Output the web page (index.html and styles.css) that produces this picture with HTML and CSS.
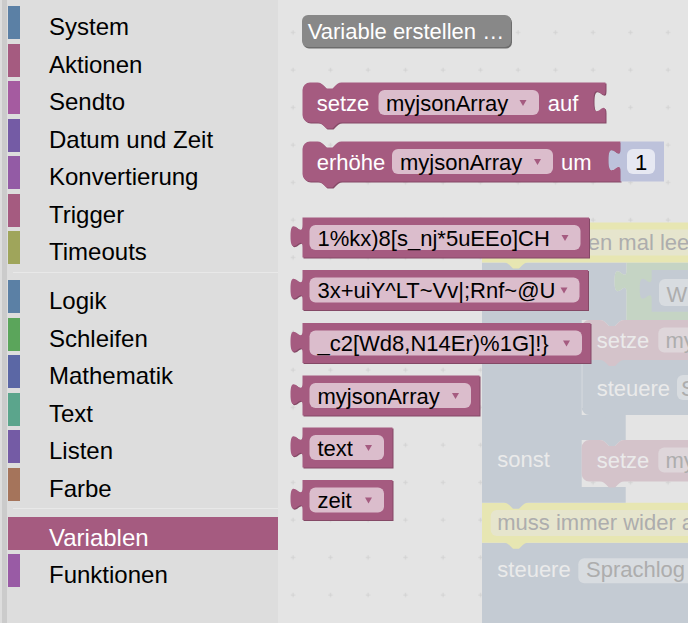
FILE: index.html
```html
<!DOCTYPE html>
<html lang="de">
<head>
<meta charset="utf-8">
<title>Blockly – Variablen</title>
<link rel="stylesheet" href="styles.css">
</head>
<body>
<div class="app">
  <nav class="toolbox">
    <div class="row"><span class="bar c-system"></span><span class="label">System</span></div>
    <div class="row"><span class="bar c-aktionen"></span><span class="label">Aktionen</span></div>
    <div class="row"><span class="bar c-sendto"></span><span class="label">Sendto</span></div>
    <div class="row"><span class="bar c-datum"></span><span class="label">Datum und Zeit</span></div>
    <div class="row"><span class="bar c-konv"></span><span class="label">Konvertierung</span></div>
    <div class="row"><span class="bar c-trigger"></span><span class="label">Trigger</span></div>
    <div class="row"><span class="bar c-timeouts"></span><span class="label">Timeouts</span></div>
    <div class="sep"></div>
    <div class="row"><span class="bar c-logik"></span><span class="label">Logik</span></div>
    <div class="row"><span class="bar c-schleifen"></span><span class="label">Schleifen</span></div>
    <div class="row"><span class="bar c-mathe"></span><span class="label">Mathematik</span></div>
    <div class="row"><span class="bar c-text"></span><span class="label">Text</span></div>
    <div class="row"><span class="bar c-listen"></span><span class="label">Listen</span></div>
    <div class="row"><span class="bar c-farbe"></span><span class="label">Farbe</span></div>
    <div class="sep"></div>
    <div class="row selected"><span class="bar c-variablen"></span><span class="label">Variablen</span></div>
    <div class="row"><span class="bar c-funktionen"></span><span class="label">Funktionen</span></div>
  </nav>
  <main class="workspace">
    <svg class="canvas" width="410" height="623" viewBox="278 0 410 623" xmlns="http://www.w3.org/2000/svg">
      <defs>
        <pattern id="grid" patternUnits="userSpaceOnUse" x="290.75" y="30.25" width="37.5" height="37.5">
          <path class="grid-mark" d="M0,2.25 H4.5 M2.25,0 V4.5"/>
        </pattern>
      </defs>
      <rect x="278" y="0" width="410" height="623" fill="url(#grid)"/>

      <!-- workspace blocks seen through the flyout -->
      <g class="bg-blocks">
        <path class="f-blue" d="M482,542.7 H700 V640 H482 Z"/>
        <text class="f-label" x="497.3" y="577">steuere</text>
        <rect class="f-blue-field" x="578.3" y="558.3" width="150" height="25" rx="6"/>
        <text class="f-ftext" x="586" y="577">Sprachlog</text>

        <path class="f-yellow" d="M482,502.7 H700 V542.7 H528 c-3,0 -4.5,1.5 -6,3 l-3,3 h-6 l-3,-3 c-1.5,-1.5 -3,-3 -6,-3 H482 Z"/>
        <rect class="f-yellow-field" x="490.7" y="510" width="260" height="26" rx="6"/>
        <text class="f-ftext" x="497.3" y="530">muss immer wider abgefragt werden</text>

        <path class="f-blue" d="M482,262.5 H626.5 V270 c0,15 -12,-12 -12,11.25 s12,-3.75 12,11.25 V320 H624 c-3,0 -4.5,1.5 -6,3 l-3,3 h-6 l-3,-3 c-1.5,-1.5 -3,-3 -6,-3 H581.7 V415 H625.7 V440 H624 c-3,0 -4.5,1.5 -6,3 l-3,3 h-6 l-3,-3 c-1.5,-1.5 -3,-3 -6,-3 H581.7 V487 H625.7 V502.7 H528 c-3,0 -4.5,1.5 -6,3 l-3,3 h-6 l-3,-3 c-1.5,-1.5 -3,-3 -6,-3 H482 Z"/>
        <text class="f-label" x="497.3" y="467">sonst</text>

        <path class="f-green" d="M626.5,262.5 H700 V320 H626.5 V292.5 c0,-15 -12,12 -12,-11.25 s12,3.75 12,-11.25 Z"/>
        <path class="f-blue" d="M651.7,270 H700 V311.7 H651.7 V300 c0,-15 -12,12 -12,-11.25 s12,3.75 12,-11.25 Z"/>
        <rect class="f-blue-field" x="659" y="279" width="60" height="27" rx="6"/>
        <text class="f-ftext" x="666.5" y="302">W</text>

        <path class="f-yellow" d="M482,222.5 H700 V262.5 H528 c-3,0 -4.5,1.5 -6,3 l-3,3 h-6 l-3,-3 c-1.5,-1.5 -3,-3 -6,-3 H482 Z"/>
        <rect class="f-yellow-field" x="582" y="229.5" width="200" height="26" rx="6"/>
        <text class="f-ftext" x="575.5" y="250">hen mal leer</text>

        <path class="f-blue" d="M581.7,360 H700 V415 H624 c-3,0 -4.5,1.5 -6,3 l-3,3 h-6 l-3,-3 c-1.5,-1.5 -3,-3 -6,-3 H589.2 a7.5,7.5 0 0 1 -7.5,-7.5 Z"/>
        <path class="f-edge" d="M582.2,362 V408"/>
        <text class="f-label" x="596.7" y="395.5">steuere</text>
        <rect class="f-blue-field" x="677" y="375" width="60" height="25" rx="6"/>
        <text class="f-ftext" x="681" y="395.5">S</text>

        <path class="f-pink" d="M581.7,327.5 a7.5,7.5 0 0 1 7.5,-7.5 H600 c3,0 4.5,1.5 6,3 l3,3 h6 l3,-3 c1.5,-1.5 3,-3 6,-3 H700 V360 H624 c-3,0 -4.5,1.5 -6,3 l-3,3 h-6 l-3,-3 c-1.5,-1.5 -3,-3 -6,-3 H581.7 Z"/>
        <text class="f-label" x="596.7" y="348">setze</text>
        <rect class="f-pink-field" x="658.3" y="327.5" width="60" height="25" rx="6"/>
        <text class="f-ftext" x="665.5" y="348">my</text>

        <path class="f-pink" d="M581.7,447.5 a7.5,7.5 0 0 1 7.5,-7.5 H600 c3,0 4.5,1.5 6,3 l3,3 h6 l3,-3 c1.5,-1.5 3,-3 6,-3 H700 V481.5 H624 c-3,0 -4.5,1.5 -6,3 l-3,3 h-6 l-3,-3 c-1.5,-1.5 -3,-3 -6,-3 H589.2 a7.5,7.5 0 0 1 -7.5,-7.5 Z"/>
        <text class="f-label" x="596.7" y="467.5">setze</text>
        <rect class="f-pink-field" x="658.3" y="447.5" width="60" height="25" rx="6"/>
        <text class="f-ftext" x="665.5" y="467.5">my</text>
      </g>

      <!-- flyout -->
      <g class="flyout">
        <rect class="btn-shadow" x="303" y="16.5" width="209" height="32" rx="6"/>
        <rect class="btn" x="302" y="15" width="209" height="32" rx="6"/>
        <text class="t-light" x="307.7" y="38.7">Variable erstellen …</text>

        <!-- setze … auf -->
        <path class="blk-dark" transform="translate(1,1)" d="M302.5,90 a7.5,7.5 0 0 1 7.5,-7.5 H317.5 c3,0 4.5,1.5 6,3 l3,3 h6 l3,-3 c1.5,-1.5 3,-3 6,-3 H605.5 V90 c0,15 -12,-12 -12,11.25 s12,-3.75 12,11.25 V122.5 H341.5 c-3,0 -4.5,1.5 -6,3 l-3,3 h-6 l-3,-3 c-1.5,-1.5 -3,-3 -6,-3 H310 a7.5,7.5 0 0 1 -7.5,-7.5 Z"/>
        <path class="blk" d="M302.5,90 a7.5,7.5 0 0 1 7.5,-7.5 H317.5 c3,0 4.5,1.5 6,3 l3,3 h6 l3,-3 c1.5,-1.5 3,-3 6,-3 H605.5 V90 c0,15 -12,-12 -12,11.25 s12,-3.75 12,11.25 V122.5 H341.5 c-3,0 -4.5,1.5 -6,3 l-3,3 h-6 l-3,-3 c-1.5,-1.5 -3,-3 -6,-3 H310 a7.5,7.5 0 0 1 -7.5,-7.5 Z"/>
        <text class="t-light" x="316.7" y="110.5">setze</text>
        <rect class="pill" x="378.5" y="90" width="160.5" height="25" rx="6"/>
        <text class="t-dark" x="386" y="110.5">myjsonArray</text>
        <path class="arrow" d="M519.5,100 h7 l-3.5,6 Z"/>
        <text class="t-light" x="547.7" y="110.5">auf</text>

        <!-- erhöhe … um 1 -->
        <path class="blk-dark" transform="translate(1,1)" d="M302.5,149 a7.5,7.5 0 0 1 7.5,-7.5 H317.5 c3,0 4.5,1.5 6,3 l3,3 h6 l3,-3 c1.5,-1.5 3,-3 6,-3 H620.5 V149 c0,15 -12,-12 -12,11.25 s12,-3.75 12,11.25 V181.5 H341.5 c-3,0 -4.5,1.5 -6,3 l-3,3 h-6 l-3,-3 c-1.5,-1.5 -3,-3 -6,-3 H310 a7.5,7.5 0 0 1 -7.5,-7.5 Z"/>
        <path class="blk" d="M302.5,149 a7.5,7.5 0 0 1 7.5,-7.5 H317.5 c3,0 4.5,1.5 6,3 l3,3 h6 l3,-3 c1.5,-1.5 3,-3 6,-3 H620.5 V149 c0,15 -12,-12 -12,11.25 s12,-3.75 12,11.25 V181.5 H341.5 c-3,0 -4.5,1.5 -6,3 l-3,3 h-6 l-3,-3 c-1.5,-1.5 -3,-3 -6,-3 H310 a7.5,7.5 0 0 1 -7.5,-7.5 Z"/>
        <text class="t-light" x="316.7" y="169.5">erhöhe</text>
        <rect class="pill" x="392" y="149" width="161" height="25" rx="6"/>
        <text class="t-dark" x="400" y="169.5">myjsonArray</text>
        <path class="arrow" d="M534,159 h7 l-3.5,6 Z"/>
        <text class="t-light" x="561" y="169.5">um</text>
        <path class="num-blk" d="M620.5,141.5 H664 V181.5 H620.5 V171.5 c0,-15 -12,12 -12,-11.25 s12,3.75 12,-11.25 Z"/>
        <rect class="num-field" x="627" y="149" width="28" height="25" rx="6"/>
        <text class="t-dark num" x="641" y="169.5">1</text>

        <!-- variable getters -->
        <path class="blk-dark" transform="translate(1,1)" d="M302.5,217.5 H589 V257.5 H302.5 V247.5 c0,-15 -12,12 -12,-11.25 s12,3.75 12,-11.25 Z"/>
        <path class="blk" d="M302.5,217.5 H589 V257.5 H302.5 V247.5 c0,-15 -12,12 -12,-11.25 s12,3.75 12,-11.25 Z"/>
        <rect class="pill" x="309.5" y="225" width="271" height="25" rx="6"/>
        <text class="t-dark" x="317.5" y="245.5">1%kx)8[s_nj*5uEEo]CH</text>
        <path class="arrow" d="M561.5,235 h7 l-3.5,6 Z"/>

        <path class="blk-dark" transform="translate(1,1)" d="M302.5,270 H588 V310 H302.5 V300 c0,-15 -12,12 -12,-11.25 s12,3.75 12,-11.25 Z"/>
        <path class="blk" d="M302.5,270 H588 V310 H302.5 V300 c0,-15 -12,12 -12,-11.25 s12,3.75 12,-11.25 Z"/>
        <rect class="pill" x="309.5" y="277.5" width="270" height="25" rx="6"/>
        <text class="t-dark" x="317.5" y="298">3x+uiY^LT~Vv|;Rnf~@U</text>
        <path class="arrow" d="M560.5,287.5 h7 l-3.5,6 Z"/>

        <path class="blk-dark" transform="translate(1,1)" d="M302.5,323 H590.5 V363 H302.5 V353 c0,-15 -12,12 -12,-11.25 s12,3.75 12,-11.25 Z"/>
        <path class="blk" d="M302.5,323 H590.5 V363 H302.5 V353 c0,-15 -12,12 -12,-11.25 s12,3.75 12,-11.25 Z"/>
        <rect class="pill" x="309.5" y="330.5" width="272.5" height="25" rx="6"/>
        <text class="t-dark" x="317.5" y="351">_c2[Wd8,N14Er)%1G]!}</text>
        <path class="arrow" d="M563,340.5 h7 l-3.5,6 Z"/>

        <path class="blk-dark" transform="translate(1,1)" d="M302.5,375.5 H479.5 V415.5 H302.5 V405.5 c0,-15 -12,12 -12,-11.25 s12,3.75 12,-11.25 Z"/>
        <path class="blk" d="M302.5,375.5 H479.5 V415.5 H302.5 V405.5 c0,-15 -12,12 -12,-11.25 s12,3.75 12,-11.25 Z"/>
        <rect class="pill" x="309.5" y="383" width="161.5" height="25" rx="6"/>
        <text class="t-dark" x="317.5" y="403.5">myjsonArray</text>
        <path class="arrow" d="M452,393 h7 l-3.5,6 Z"/>

        <path class="blk-dark" transform="translate(1,1)" d="M302.5,427.5 H392.5 V467.5 H302.5 V457.5 c0,-15 -12,12 -12,-11.25 s12,3.75 12,-11.25 Z"/>
        <path class="blk" d="M302.5,427.5 H392.5 V467.5 H302.5 V457.5 c0,-15 -12,12 -12,-11.25 s12,3.75 12,-11.25 Z"/>
        <rect class="pill" x="309.5" y="435" width="74.5" height="25" rx="6"/>
        <text class="t-dark" x="317.5" y="455.5">text</text>
        <path class="arrow" d="M365,445 h7 l-3.5,6 Z"/>

        <path class="blk-dark" transform="translate(1,1)" d="M302.5,480 H392.5 V520 H302.5 V510 c0,-15 -12,12 -12,-11.25 s12,3.75 12,-11.25 Z"/>
        <path class="blk" d="M302.5,480 H392.5 V520 H302.5 V510 c0,-15 -12,12 -12,-11.25 s12,3.75 12,-11.25 Z"/>
        <rect class="pill" x="309.5" y="487.5" width="74.5" height="25" rx="6"/>
        <text class="t-dark" x="317.5" y="508">zeit</text>
        <path class="arrow" d="M365,497.5 h7 l-3.5,6 Z"/>
      </g>
    </svg>
  </main>
</div>
</body>
</html>
```

FILE: styles.css
```css
html, body {
  margin: 0;
  padding: 0;
  height: 100%;
}

body {
  background: #dddddd;
  font-family: "Liberation Sans", Arial, sans-serif;
  overflow: hidden;
}

.app {
  display: flex;
  width: 688px;
  height: 623px;
}

/* ---------- toolbox ---------- */
.toolbox {
  flex: none;
  display: flex;
  flex-direction: column;
  width: 276px;
  margin-left: 2px;
  border-left: 5px solid #cbcbcb;
  box-sizing: border-box;
  background: #dddddd;
  padding: 6px 0 0 1px;
}

.row {
  flex: none;
  display: flex;
  align-items: flex-start;
  height: 33px;
  margin-bottom: 4.5px;
}

.bar {
  flex: none;
  width: 12px;
  height: 33px;
}

.label {
  margin-left: 29px;
  font-size: 24px;
  line-height: 41px;
  color: #000000;
  white-space: nowrap;
}

.row.selected {
  background: #a55b80;
}

.row.selected .label {
  color: #ffffff;
}

.sep {
  flex: none;
  height: 0;
  border-bottom: 1px solid #e8e8e8;
  margin: 3px 0 7.5px 5px;
}

.c-system { background: #5b80a5; }
.c-aktionen { background: #a55b80; }
.c-sendto { background: #a55ba0; }
.c-datum { background: #745ba5; }
.c-konv { background: #935ba5; }
.c-trigger { background: #a55b80; }
.c-timeouts { background: #9fa55b; }
.c-logik { background: #5b80a5; }
.c-schleifen { background: #5ba55b; }
.c-mathe { background: #5b67a5; }
.c-text { background: #5ba58c; }
.c-listen { background: #745ba5; }
.c-farbe { background: #a5745b; }
.c-variablen { background: #a55b80; }
.c-funktionen { background: #995ba5; }

/* ---------- workspace / flyout ---------- */
.workspace {
  flex: 1;
  background: #e4e4e4;
  overflow: hidden;
}

.canvas {
  display: block;
}

.canvas text {
  font-family: "Liberation Sans", Arial, sans-serif;
  font-size: 22px;
}

.grid-mark {
  fill: none;
  stroke: #d2d2d2;
  stroke-width: 1;
}

/* faded workspace blocks */
.f-blue { fill: #c4cbd3; }
.f-green { fill: #c5d4c4; }
.f-pink { fill: #d4c3ca; }
.f-yellow { fill: #e7e6b2; }
.f-blue-field { fill: #d8dce0; }
.f-pink-field { fill: #ded6da; }
.f-yellow-field { fill: #e6e5cd; }
.f-label { fill: #eaeaea; }
.f-ftext { fill: #adadad; }
.f-edge { fill: none; stroke: #d2d7dd; stroke-width: 1; }

/* flyout blocks */
.btn { fill: #888888; }
.btn-shadow { fill: #6c6c6c; }
.blk { fill: #a55b80; }
.blk-dark { fill: #844966; }
.pill { fill: #dbbdcc; }
.arrow { fill: #a55b80; }
.num-blk { fill: #bdc2db; }
.num-field { fill: #e6e8f2; }
.t-light { fill: #ffffff; }
.t-dark { fill: #000000; }
.num { text-anchor: middle; }
```
